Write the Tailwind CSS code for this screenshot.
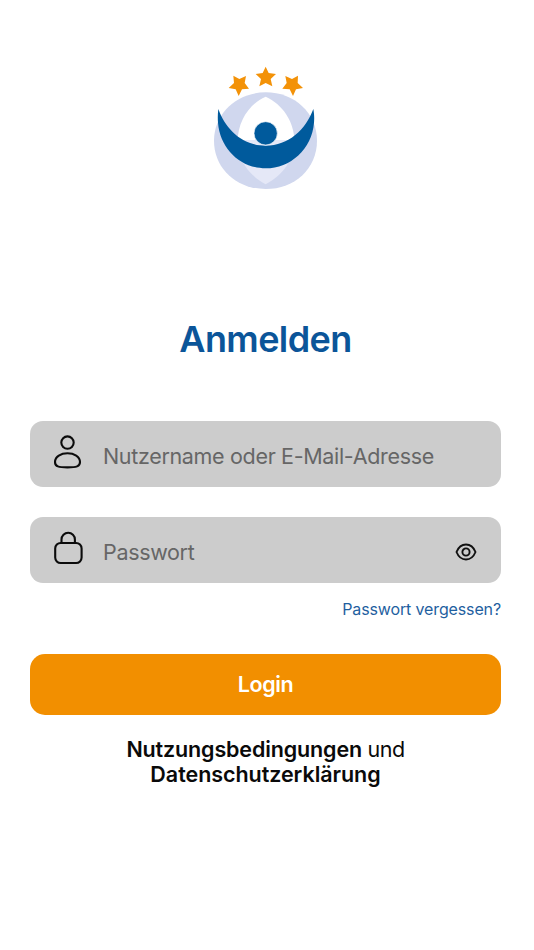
<!DOCTYPE html>
<html lang="de">
<head>
<meta charset="utf-8">
<title>Anmelden</title>
<script src="https://cdn.jsdelivr.net/npm/@tailwindcss/browser@4"></script>
</head>
<body class="bg-white font-['Inter',sans-serif]">
<main class="flex h-[950px] w-[534px] flex-col pl-[30px] pr-[33px] pt-[60px]">
  <svg class="ml-[175px] h-[135px] w-[124px] shrink-0" viewBox="0 0 372 405">
    <path fill="#d0d7ee" d="M182 97C269 97 336 160 336 242C336 326 269 387 182 387C95 387 27 326 27 242C27 160 95 97 182 97Z"/>
    <path fill="#fff" d="M182 110C232 132 268 185 268 244H98C98 185 132 132 182 110Z"/>
    <path fill="#e5e8f7" d="M98 240H268C268 296 238 342 182 373C126 342 98 296 98 240Z"/>
    <path fill="#005a9c" d="M40 147C62 209 113 257 182 257C251 257 302 209 325 147C328 163 328 176 327 188C321 267 256 325 182 325C108 325 45 267 39 188C38 176 38 163 40 147Z"/>
    <circle cx="182" cy="220" r="35" fill="#005a9c" stroke="#fff" stroke-width="2"/>
    <g fill="#f39208">
      <path d="M182 20L191 39L213 42L197 57L202 79L182 69L163 79L168 57L152 42L173 39Z"/>
      <path d="M85 47L103 57L123 48L119 69L132 86L111 88L101 108L92 88L71 84L87 69Z"/>
      <path d="M279 47L261 57L241 48L245 69L232 86L254 88L264 108L273 88L294 84L278 69Z"/>
    </g>
  </svg>
  <h1 class="mt-[119px] h-[50px] text-center text-[36px] font-semibold leading-[50px] tracking-[-0.6px] text-[#0b5599]">Anmelden</h1>
  <div class="mt-[57px] flex h-[66px] shrink-0 items-center rounded-[13px] bg-[#ccc] pl-[24px]">
    <svg class="-mt-[5px] h-[34px] w-[28px]" viewBox="0 0 28 34" fill="none" stroke="#0b0b0b" stroke-width="2.1">
      <circle cx="13.5" cy="7.6" r="6.2"/>
      <path d="M13.5 18.3C20 18.3 26 21.4 26 27C26 31.5 22.5 32.4 13.5 32.4S1 31.5 1 27C1 21.4 7 18.3 13.5 18.3Z"/>
    </svg>
    <span class="ml-[21px] mt-[4px] whitespace-nowrap text-[21.5px] tracking-[-0.33px] text-[#666]">Nutzername oder E-Mail-Adresse</span>
  </div>
  <div class="mt-[30px] flex h-[66px] shrink-0 items-center rounded-[13px] bg-[#ccc] pl-[24px] pr-[24px]">
    <svg class="-mt-[4px] h-[34px] w-[29px]" viewBox="0 0 29 34" fill="none" stroke="#0b0b0b" stroke-width="2.1">
      <path d="M7.5 12V8.5a6.7 6.7 0 0 1 13.4 0V12"/>
      <rect x="1.2" y="12" width="26.4" height="20" rx="5.5"/>
    </svg>
    <span class="ml-[20px] mt-[4px] text-[21.5px] tracking-[-0.33px] text-[#666]">Passwort</span>
    <svg class="ml-auto mt-[3px] h-[18px] w-[22px]" viewBox="0 0 22 18" fill="none" stroke="#111" stroke-width="1.9">
      <path d="M1.5 9C3.5 4 7 1.5 11 1.5S18.500 4 20.500 9C18.500 14 15 16.500 11 16.500S3.500 14 1.500 9Z"/>
      <circle cx="11" cy="9" r="3.6"/>
    </svg>
  </div>
  <a class="mt-[14px] h-[24px] whitespace-nowrap text-right text-[16px] leading-[24px] tracking-[-0.13px] text-[#1f5f9f]">Passwort vergessen?</a>
  <button class="mt-[33px] h-[61px] shrink-0 rounded-[15px] bg-[#f28f00] text-[21.5px] font-semibold tracking-[-0.4px] text-white">Login</button>
  <p class="mt-[22px] text-center text-[21.5px] leading-[25px] tracking-[-0.5px] text-[#0a0a0a]"><span class="font-semibold tracking-[-0.14px]">Nutzungsbedingungen</span> und<br><span class="font-semibold tracking-[-0.05px]">Datenschutzerklärung</span></p>
</main>
</body>
</html>
